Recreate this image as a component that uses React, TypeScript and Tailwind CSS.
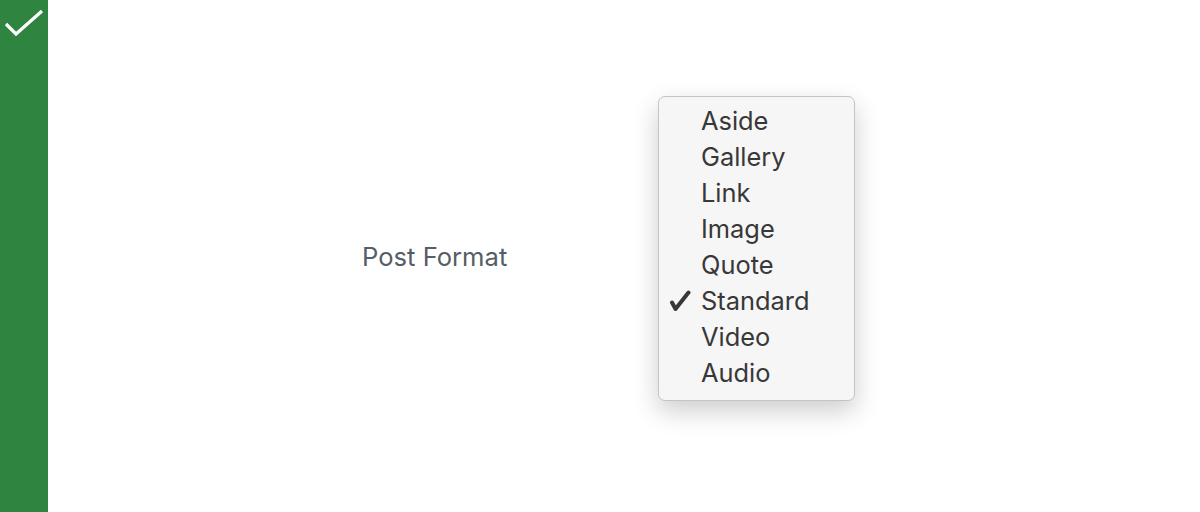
import React from "react";

const items = ["Aside", "Gallery", "Link", "Image", "Quote", "Standard", "Video", "Audio"];

export default function App() {
  return (
    <div className="flex h-[512px] w-[1200px] bg-white" style={{ fontFamily: "Inter, 'Noto Sans', sans-serif" }}>
      <div className="relative h-full w-[48px] shrink-0 bg-[#2f8540]">
        <svg className="absolute left-[4px] top-[9px]" width="40" height="30" viewBox="0 0 40 30">
          <path d="M2 15 L12 25 L38 2" fill="none" stroke="white" strokeWidth="3.2" />
        </svg>
      </div>
      <div className="flex flex-1 items-start">
        <div className="ml-[314px] mt-[240px] w-[296px] text-[25.6px] leading-[34px] text-[#555d66]">Post Format</div>
        <div className="mt-[96px] w-[197px] rounded-[7px] border border-[#c4c4c4] bg-[#f6f6f6] pb-[9px] pt-[6px] shadow-[0_10px_26px_rgba(0,0,0,0.2)]">
          {items.map((it) => (
            <div key={it} className="flex h-[36px] items-center text-[25.4px] text-[#383838]">
              <span className="flex w-[42px] items-center pl-[10px]">
                {it === "Standard" ? (
                  <svg width="22" height="22" viewBox="0 0 22 22">
                    <path d="M3 12.5 L6.5 19 L19.5 2.5" fill="none" stroke="#383838" strokeWidth="4" strokeLinecap="round" strokeLinejoin="round" />
                  </svg>
                ) : null}
              </span>
              <span>{it}</span>
            </div>
          ))}
        </div>
      </div>
    </div>
  );
}
